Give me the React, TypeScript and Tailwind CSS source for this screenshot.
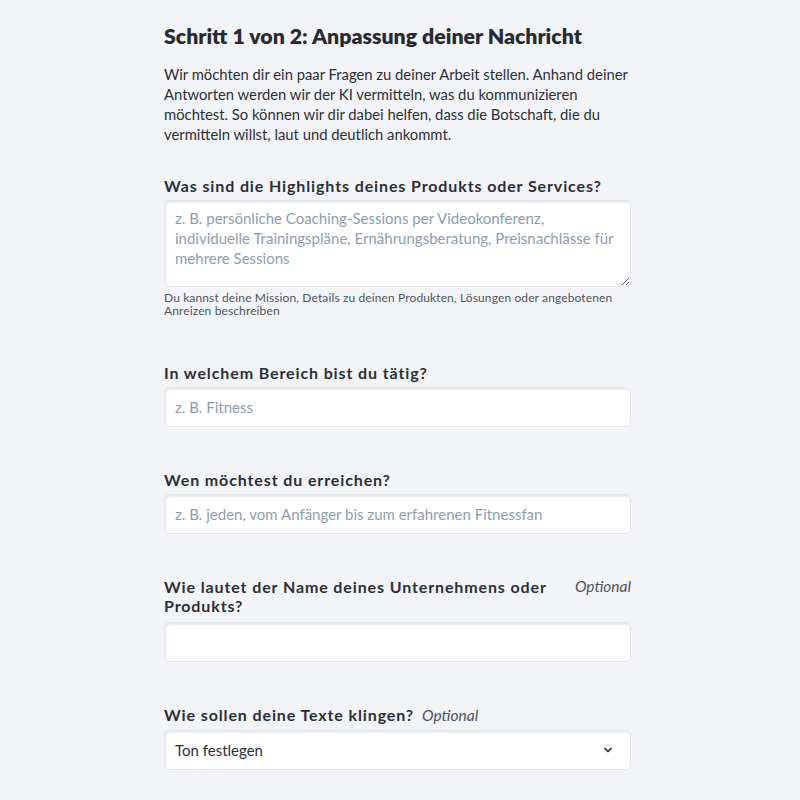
import { ChevronDown } from 'lucide-react'

const font = { fontFamily: 'Lato, "Noto Sans", sans-serif' }

const fieldCls =
  'w-full bg-white rounded-[5px] border border-[#e3e7ec] shadow-[inset_1px_2px_2px_rgba(60,80,100,0.12)] px-[10px] text-[15px] text-[#2b3038] placeholder:text-[#8d9db1] outline-none'

function Label({ text, optional, inline }: { text: string; optional?: boolean; inline?: boolean }) {
  if (optional && !inline) {
    return (
      <div className="flex justify-between items-start gap-6 mb-[7px]">
        <label className="text-[16px] font-bold tracking-[0.055em] leading-[19px] text-[#2b3038]">{text}</label>
        <span className="text-[15.5px] italic text-[#4b525c] leading-[19px] shrink-0">Optional</span>
      </div>
    )
  }
  return (
    <div className="flex items-baseline gap-[8px] mb-[5px]">
      <label className="text-[16px] font-bold tracking-[0.055em] leading-[19px] text-[#2b3038]">{text}</label>
      {optional && <span className="text-[15.5px] italic text-[#4b525c] leading-[19px]">Optional</span>}
    </div>
  )
}

export default function App() {
  return (
    <div className="min-h-[800px] bg-[#f3f4f7]" style={font}>
      <div className="w-[467px] ml-[164px] pt-[22px] pb-[30px]">
        <h1 className="text-[21.3px] font-extrabold leading-[28px] text-[#262b33]">
          Schritt 1 von 2: Anpassung deiner Nachricht
        </h1>
        <p className="mt-[14px] mr-[-6px] text-[14.8px] leading-[20px] text-[#2b3038]">
          Wir möchten dir ein paar Fragen zu deiner Arbeit stellen. Anhand deiner Antworten werden wir der KI
          vermitteln, was du kommunizieren möchtest. So können wir dir dabei helfen, dass die Botschaft, die du
          vermitteln willst, laut und deutlich ankommt.
        </p>

        <div className="mt-[32px]">
          <Label text="Was sind die Highlights deines Produkts oder Services?" />
          <textarea
            className={fieldCls + ' block h-[87px] py-[7px] leading-[20px] resize-y'}
            placeholder="z. B. persönliche Coaching-Sessions per Videokonferenz, individuelle Trainingspläne, Ernährungsberatung, Preisnachlässe für mehrere Sessions"
          />
          <p className="mt-[4px] text-[12px] leading-[13px] text-[#4f5661] tracking-[0.01em]">
            Du kannst deine Mission, Details zu deinen Produkten, Lösungen oder angebotenen Anreizen beschreiben
          </p>
        </div>

        <div className="mt-[46px]">
          <Label text="In welchem Bereich bist du tätig?" />
          <input className={fieldCls + ' block h-[40px] w-[463px]'} placeholder="z. B. Fitness" />
        </div>

        <div className="mt-[43px]">
          <Label text="Wen möchtest du erreichen?" />
          <input
            className={fieldCls + ' block h-[40px]'}
            placeholder="z. B. jeden, vom Anfänger bis zum erfahrenen Fitnessfan"
          />
        </div>

        <div className="mt-[43px]">
          <Label text="Wie lautet der Name deines Unternehmens oder Produkts?" optional />
          <input className={fieldCls + ' block h-[40px]'} />
        </div>

        <div className="mt-[43px]">
          <Label text="Wie sollen deine Texte klingen?" optional inline />
          <button
            className={fieldCls + ' flex items-center justify-between h-[40px] text-left cursor-pointer'}
          >
            <span>Ton festlegen</span>
            <ChevronDown size={12} strokeWidth={3.5} className="text-[#2b3038] mr-[6px]" />
          </button>
        </div>
      </div>
    </div>
  )
}
